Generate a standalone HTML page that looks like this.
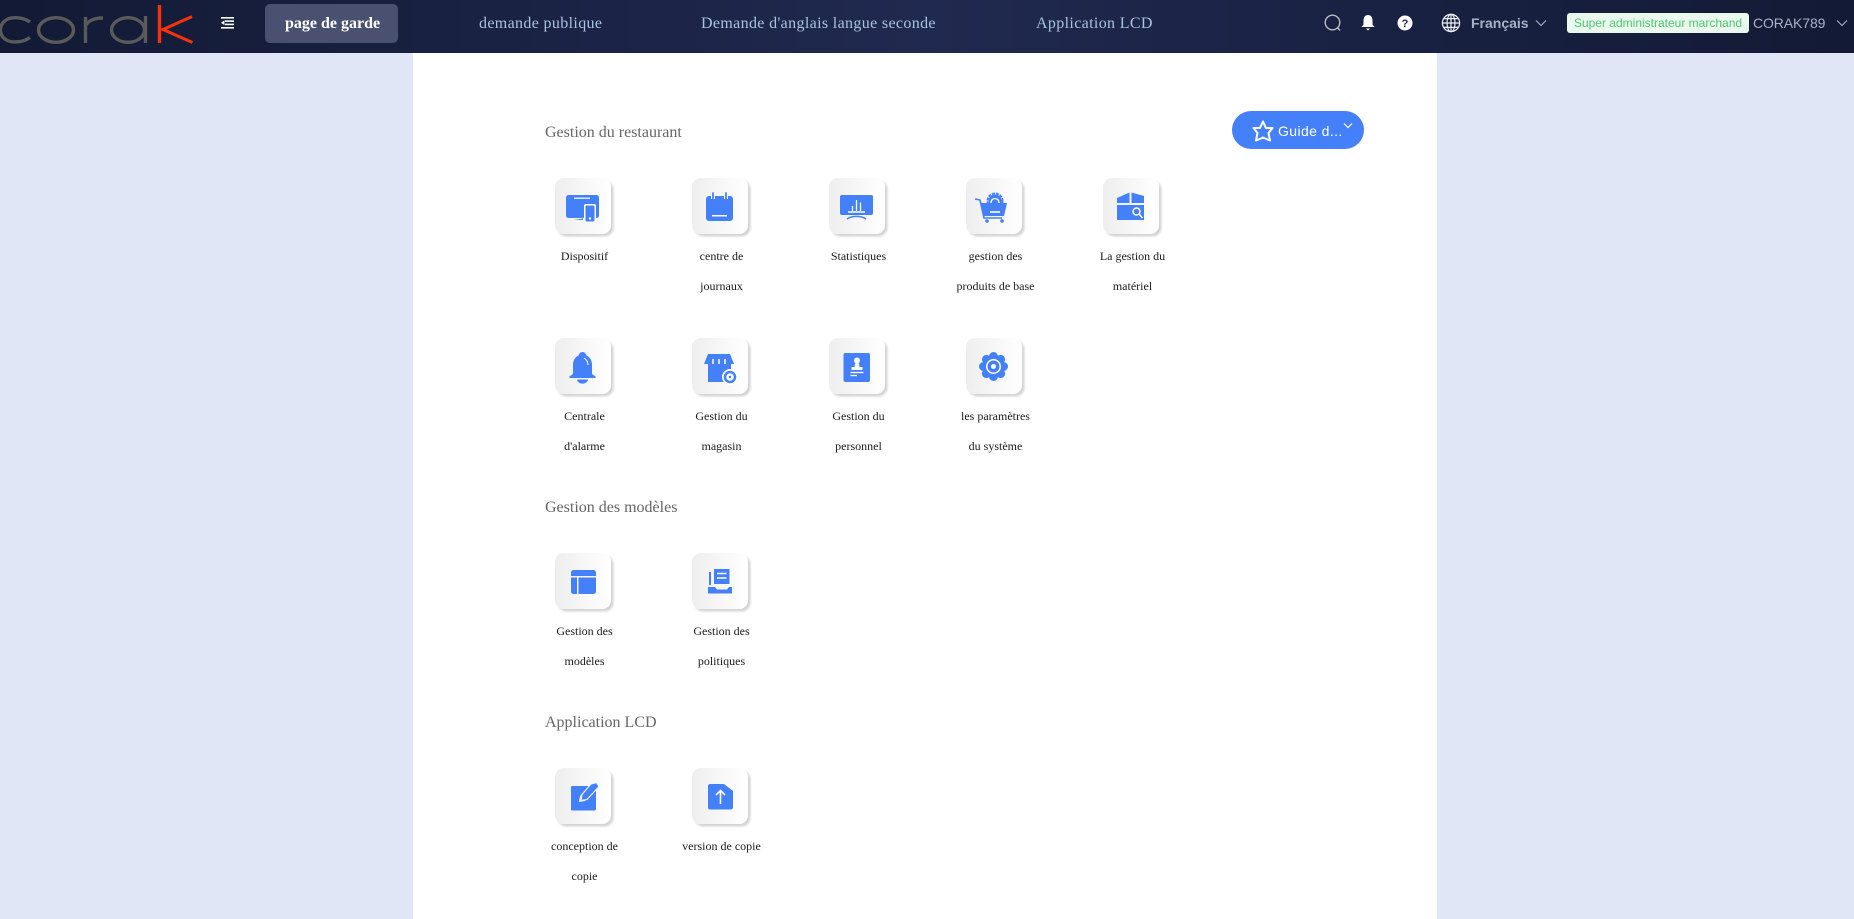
<!DOCTYPE html>
<html lang="fr"><head><meta charset="utf-8"><title>Corak</title>
<style>
*{box-sizing:border-box}
html,body{margin:0;padding:0;width:1854px;height:919px;overflow:hidden;background:#e0e6f5;font-family:"Liberation Serif",serif}
.abs,.tile,.lb,.h,.nav{position:absolute}
#hd{position:absolute;left:0;top:0;width:1854px;height:53px;background:linear-gradient(90deg,#121a35 0%,#20294f 50%,#121a35 100%)}
#panel{position:absolute;left:413px;top:53px;width:1024px;height:866px;background:#fff}
.nav{top:14px;height:20px;line-height:20px;font-size:16px;letter-spacing:.35px;color:#a9c3de;white-space:nowrap}
.tile{width:56px;height:56px;margin-top:-1px;border-radius:9px;background:linear-gradient(90deg,#eeeeee,#ffffff);box-shadow:2.5px 2.5px 2px #d4d4d4}
.tile svg{position:absolute;left:0;top:1px;width:55px;height:55px}
.lb{width:109px;text-align:center;font-size:12px;line-height:30px;color:#1a1a1a;white-space:nowrap}
.h{left:545px;font-size:16px;line-height:20px;color:#666;white-space:nowrap;margin-top:1px}
.sans{font-family:"Liberation Sans",sans-serif}
</style></head><body>
<div id="panel"></div>
<div id="hd">
<svg class="abs" style="left:0;top:0" width="200" height="53" viewBox="0 0 200 53" fill="none"><title>corak</title>
<g stroke="#5a5a5a" stroke-width="3.400"><path d="M30 22C25 18.500 20 17.700 15 17.700C6 17.700 0.500 23 0.500 30C0.500 37 6 42 15 42C20 42 25 41 30 37.500"/><ellipse cx="56" cy="30" rx="17.500" ry="12.300"/><path d="M85.500 43V17M85 27C87 21 94 18 103 18"/><ellipse cx="128" cy="30" rx="16.500" ry="12.300"/><path d="M145.500 16V43"/></g>
<g stroke="#f8330b" stroke-width="3.400"><path d="M159.500 5V43"/><path d="M192 16.500L163 29.500L192.500 42.500" stroke-width="3"/></g></svg>
<svg class="abs" style="left:220px;top:16px" width="15" height="14" viewBox="0 0 15 14" fill="#fff"><rect x="1" y="1" width="13" height="1.600"/><rect x="5" y="4.300" width="9" height="1.600"/><rect x="5" y="7.600" width="9" height="1.600"/><rect x="1" y="11" width="13" height="1.600"/><path d="M1 6.700L4.500 4.300V9.200Z"/></svg>
<div class="abs" style="left:265px;top:4px;width:133px;height:39px;border-radius:5px;background:#4a5170"></div>
<div class="nav" style="left:285px;color:#fff;font-weight:bold;letter-spacing:0">page de garde</div>
<div class="nav" style="left:479px">demande publique</div>
<div class="nav" style="left:701px">Demande d'anglais langue seconde</div>
<div class="nav" style="left:1036px">Application LCD</div>
<svg class="abs" style="left:1323px;top:13px" width="20" height="20" viewBox="0 0 20 20" fill="none" stroke="#b8bcc6" stroke-width="1.400"><circle cx="9.500" cy="9.500" r="7.300"/><path d="M14.800 15L17 17.500"/></svg>
<svg class="abs" style="left:1360px;top:14px" width="16" height="18" viewBox="0 0 16 18" fill="#fff"><path d="M8 1C5 1 3.500 3.500 3.500 6.500V10.500L1.500 13H14.500L12.500 10.500V6.500C12.500 3.500 11 1 8 1Z"/><path d="M6 14.500H10L8 16.500Z"/></svg>
<svg class="abs" style="left:1397px;top:15px" width="16" height="16" viewBox="0 0 16 16"><circle cx="8" cy="8" r="7.500" fill="#fff"/><text x="8" y="12" text-anchor="middle" font-size="11" font-weight="bold" font-family="Liberation Sans" fill="#20294f">?</text></svg>
<svg class="abs" style="left:1441px;top:13px" width="20" height="20" viewBox="0 0 20 20" fill="none" stroke="#eef0f5" stroke-width="1.200"><circle cx="10" cy="10" r="8.600"/><ellipse cx="10" cy="10" rx="4" ry="8.600"/><path d="M10 1.400V18.600M1.400 10H18.600M2.700 5.600H17.300M2.700 14.400H17.300"/></svg>
<div class="abs sans" style="left:1471px;top:13px;line-height:20px;font-size:14px;font-weight:bold;color:#a9b1c6;white-space:nowrap">Français</div>
<svg class="abs" style="left:1535px;top:18px" width="12" height="10" viewBox="0 0 12 10" fill="none" stroke="#a9b1c6" stroke-width="1.100"><path d="M1 2.500L6 7.500L11 2.500"/></svg>
<div class="abs sans" style="left:1567px;top:13px;width:182px;height:20px;line-height:20px;text-align:center;font-size:12px;color:#4fc56f;background:#e9f9ee;border-radius:3px;white-space:nowrap">Super administrateur marchand</div>
<div class="abs sans" style="left:1753px;top:13px;line-height:20px;font-size:14px;letter-spacing:-.1px;color:#a9b1c6;white-space:nowrap">CORAK789</div>
<svg class="abs" style="left:1836px;top:18px" width="12" height="10" viewBox="0 0 12 10" fill="none" stroke="#a9b1c6" stroke-width="1.100"><path d="M1 2.500L6 7.500L11 2.500"/></svg>
</div>

<div class="h" style="top:122px">Gestion du restaurant</div>
<div class="h" style="top:497px">Gestion des modèles</div>
<div class="h" style="top:712px">Application LCD</div>

<div class="abs" style="left:1232px;top:111px;width:132px;height:38px;border-radius:19px;background:#4480f9"></div>
<svg class="abs" style="left:1251px;top:119px" width="24" height="24" viewBox="0 0 24 24" fill="none" stroke="#fff" stroke-width="2" stroke-linejoin="round"><path d="M12 2.500L15 9H21.500L17.500 14L19 21.500L12 18.500L5 21.500L6.500 14L2.500 9H9Z"/></svg>
<div class="abs sans" style="left:1278px;top:121px;line-height:20px;font-size:14px;letter-spacing:.4px;color:#fff;white-space:nowrap">Guide d...</div>
<svg class="abs" style="left:1343px;top:122px" width="10" height="8" viewBox="0 0 10 8" fill="none" stroke="#fff" stroke-width="1.200"><path d="M1 1.500L5 5.500L9 1.500"/></svg>

<!-- Row 1 -->
<div class="tile" style="left:555px;top:179px"><svg viewBox="0 0 55 55"><rect x="11" y="16" width="33" height="23" rx="2.500" fill="#4480f9"/><rect x="19" y="18.500" width="16" height="1.500" fill="#dfe9fe"/><path d="M19 41L28 39.500V41Z" fill="#4480f9"/><rect x="29" y="25" width="12" height="19" rx="2" fill="#fff"/><rect x="30.500" y="26.500" width="9" height="16" rx="1" fill="#4480f9"/><circle cx="35" cy="39.500" r="1.200" fill="#fff"/></svg></div>
<div class="tile" style="left:692px;top:179px"><svg viewBox="0 0 55 55"><rect x="14" y="17" width="27" height="25" rx="3" fill="#4480f9"/><path d="M21 14V20M34 14V20" stroke="#fff" stroke-width="4"/><path d="M21 14V19.500M34 14V19.500" stroke="#4480f9" stroke-width="1.800" stroke-linecap="round"/><rect x="20" y="36" width="15" height="1.500" fill="#fff"/></svg></div>
<div class="tile" style="left:829px;top:179px"><svg viewBox="0 0 55 55"><rect x="11" y="16" width="33" height="20" rx="2" fill="#4480f9"/><path d="M19 33H36" stroke="#fff" stroke-width="1.500"/><path d="M23.500 32V27M27.500 32V21M31.500 32V23.500" stroke="#fff" stroke-width="1.300"/><path d="M18 40C23 36.500 32 36.500 37 40" fill="none" stroke="#4480f9" stroke-width="1.500"/></svg></div>
<div class="tile" style="left:966px;top:179px"><svg viewBox="0 0 55 55"><path d="M9 20L14 21L18 39H36" fill="none" stroke="#4480f9" stroke-width="1.600"/><path d="M15 24H41L38 37H18Z" fill="#4480f9"/><circle cx="29" cy="22" r="6.500" fill="#4480f9"/><circle cx="29" cy="22" r="7.500" fill="none" stroke="#4480f9" stroke-width="2" stroke-dasharray="3 1"/><path d="M25 24C25 18 33 18 33 24" fill="none" stroke="#fff" stroke-width="1.300"/><path d="M24 33H34" stroke="#fff" stroke-width="1.600"/><circle cx="21" cy="42" r="1.800" fill="#4480f9"/><circle cx="36" cy="42" r="1.800" fill="#4480f9"/></svg></div>
<div class="tile" style="left:1103px;top:179px"><svg viewBox="0 0 55 55"><path d="M14 19L26.500 13.500V24H14ZM28.500 13.500L41 17V24H28.500Z" fill="#4480f9"/><path d="M14 26H41V41H14Z" fill="#4480f9"/><circle cx="33.500" cy="32.500" r="3.500" fill="none" stroke="#fff" stroke-width="1.500"/><path d="M36 35L39.500 39" stroke="#fff" stroke-width="1.600"/></svg></div>
<div class="lb" style="left:530px;top:241px">Dispositif</div>
<div class="lb" style="left:667px;top:241px">centre de<br>journaux</div>
<div class="lb" style="left:804px;top:241px">Statistiques</div>
<div class="lb" style="left:941px;top:241px">gestion des<br>produits de base</div>
<div class="lb" style="left:1078px;top:241px">La gestion du<br>matériel</div>

<!-- Row 2 -->
<div class="tile" style="left:555px;top:339px"><svg viewBox="0 0 55 55"><path d="M27.500 13C25 13 24 15 23.500 16.500C20 18 18 21.500 18 26V35L14.500 37.500C14 38 14.500 39 15 39H40C40.500 39 41 38 40.500 37.500L37 35V26C37 21.500 35 18 31.500 16.500C31 15 30 13 27.500 13Z" fill="#4480f9"/><path d="M22 40.500H33C32 46 23 46 22 40.500Z" fill="#4480f9"/><path d="M29 19C31.500 20.500 33 23 33 26" fill="none" stroke="#fff" stroke-width="1"/></svg></div>
<div class="tile" style="left:692px;top:339px"><svg viewBox="0 0 55 55"><path d="M16 15H38L42 25H39V43H16V25H12Z" fill="#4480f9"/><path d="M21 20V25M27 20V25M33 20V25" stroke="#fff" stroke-width="1.500"/><circle cx="38" cy="38" r="8" fill="#fff"/><circle cx="38" cy="38" r="5" fill="none" stroke="#4480f9" stroke-width="2.500"/><circle cx="38" cy="38" r="1.300" fill="#4480f9"/></svg></div>
<div class="tile" style="left:829px;top:339px"><svg viewBox="0 0 55 55"><rect x="14.500" y="14" width="26.500" height="29" rx="2" fill="#4480f9"/><circle cx="28" cy="21.500" r="3" fill="#fff"/><path d="M26 24.500H30L30.500 28H33.500V31H22.500V28H25.500Z" fill="#fff"/><path d="M21.500 33.500H34.500" stroke="#fff" stroke-width="1.300"/><path d="M21.500 36.500H28" stroke="#fff" stroke-width="1.300"/></svg></div>
<div class="tile" style="left:966px;top:339px"><svg viewBox="0 0 55 55"><g fill="#4480f9"><circle cx="27.500" cy="17.500" r="4.500"/><circle cx="34.600" cy="20.400" r="4.500"/><circle cx="37.500" cy="27.500" r="4.500"/><circle cx="34.600" cy="34.600" r="4.500"/><circle cx="27.500" cy="37.500" r="4.500"/><circle cx="20.400" cy="34.600" r="4.500"/><circle cx="17.500" cy="27.500" r="4.500"/><circle cx="20.400" cy="20.400" r="4.500"/><circle cx="27.500" cy="27.500" r="11"/></g><circle cx="27.500" cy="27.500" r="7.500" fill="#fff"/><circle cx="27.500" cy="27.500" r="6" fill="#4480f9"/><circle cx="27.500" cy="27.500" r="2.500" fill="#fff"/></svg></div>
<div class="lb" style="left:530px;top:401px">Centrale<br>d'alarme</div>
<div class="lb" style="left:667px;top:401px">Gestion du<br>magasin</div>
<div class="lb" style="left:804px;top:401px">Gestion du<br>personnel</div>
<div class="lb" style="left:941px;top:401px">les paramètres<br>du système</div>

<!-- Section 2 -->
<div class="tile" style="left:555px;top:554px"><svg viewBox="0 0 55 55"><path d="M19 16H38C40 16 41 17 41 19V22H16V19C16 17 17 16 19 16Z" fill="#4480f9"/><path d="M16 23.500H22V40H19C17 40 16 39 16 37Z" fill="#4480f9"/><path d="M23.500 23.500H41V37C41 39 40 40 38 40H23.500Z" fill="#4480f9"/></svg></div>
<div class="tile" style="left:692px;top:554px"><svg viewBox="0 0 55 55"><rect x="22" y="15" width="15.500" height="15" fill="#4480f9"/><path d="M25 19.500H34.500M25 24H34.500" stroke="#fff" stroke-width="1.500"/><rect x="17" y="18" width="2" height="13" fill="#4480f9"/><path d="M16 33H23L25 35.500H35L37 33H40V39.500H16Z" fill="#4480f9"/></svg></div>
<div class="lb" style="left:530px;top:616px">Gestion des<br>modèles</div>
<div class="lb" style="left:667px;top:616px">Gestion des<br>politiques</div>

<!-- Section 3 -->
<div class="tile" style="left:555px;top:769px"><svg viewBox="0 0 55 55"><path d="M17 17H34L25 27L24 33L30 32L41 20V40C41 41 40 41.500 39.500 41.500H17C16.300 41.500 16 41 16 40V18C16 17.500 16.300 17 17 17Z" fill="#4480f9"/><path d="M36 15L41.500 13.500L44 17.500L32 30.500L26 31.500L27 25.500Z" fill="#4480f9" stroke="#eef3fe" stroke-width="1.200"/></svg></div>
<div class="tile" style="left:692px;top:769px"><svg viewBox="0 0 55 55"><path d="M18 15H32L41 22V38C41 39.500 40 40.500 38.500 40.500H18C16.500 40.500 16 39.500 16 38V17C16 16 17 15 18 15Z" fill="#4480f9"/><path d="M28.500 35V22M24 26L28.500 21.500L33 26" fill="none" stroke="#fff" stroke-width="1.600"/></svg></div>
<div class="lb" style="left:530px;top:831px">conception de<br>copie</div>
<div class="lb" style="left:667px;top:831px">version de copie</div>
</body></html>
